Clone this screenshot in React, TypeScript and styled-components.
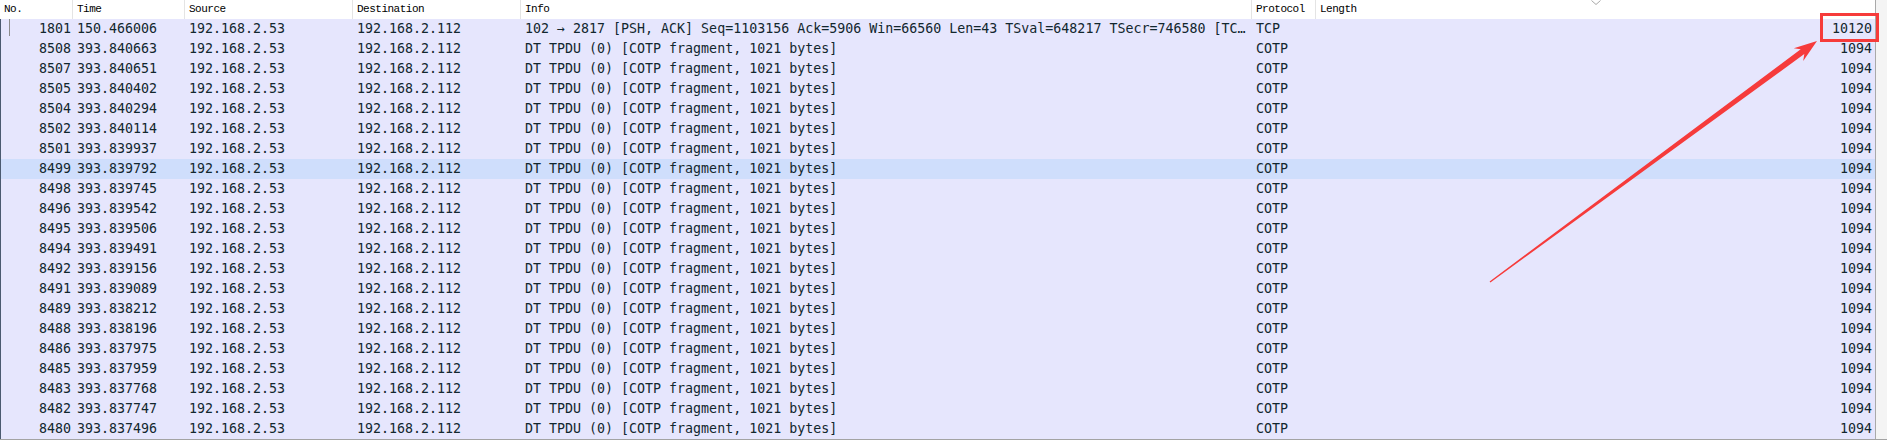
import React from "react";
import styled, { createGlobalStyle } from "styled-components";

const GlobalStyle = createGlobalStyle`
  html, body { margin: 0; padding: 0; background: #ffffff; }
  body { width: 1887px; height: 440px; overflow: hidden; }
`;

const HEADER_COLS = "73px 112px 168px 168px 731px 64px 559px";
const ROW_COLS = "72px 112px 168px 168px 731px 64px 559px";

const Frame = styled.div`
  position: relative;
  display: flex;
  width: 1887px;
  height: 440px;
  box-sizing: border-box;
  border-bottom: 1px solid #a3a3a3;
`;

const Pane = styled.div`
  display: flex;
  flex-direction: column;
  width: 1875px;
`;

const Gutter = styled.div`
  flex: 1;
  border-left: 1px solid #a9a9a9;
  background: #f4f4f4;
`;

const HeaderRow = styled.div`
  display: grid;
  grid-template-columns: ${HEADER_COLS};
  height: 19px;
  background: #ffffff;
`;

const HeaderCell = styled.div<{ $last?: boolean }>`
  position: relative;
  box-sizing: border-box;
  padding-left: 4px;
  border-right: ${(p) => (p.$last ? "none" : "1px solid #e4e4e4")};
  font-family: "Liberation Mono", monospace;
  font-size: 11px;
  letter-spacing: -0.5px;
  line-height: 19px;
  color: #000000;
  white-space: nowrap;
  overflow: hidden;
`;

const SortMark = styled.svg`
  position: absolute;
  left: 50%;
  top: 0;
  margin-left: -5px;
`;

const Body = styled.div`
  display: flex;
  flex-direction: column;
`;

const Row = styled.div<{ $selected?: boolean }>`
  display: grid;
  grid-template-columns: ${ROW_COLS};
  height: 20px;
  border-left: 1px solid #4b5a70;
  background: ${(p) => (p.$selected ? "#cfdefc" : "#e6e6fd")};
  font-family: "DejaVu Sans Mono", "Liberation Mono", monospace;
  font-size: 13.3px;
  line-height: 20px;
  color: #12272e;
`;

const Cell = styled.div<{ $right?: boolean; $pr?: number }>`
  box-sizing: border-box;
  padding-left: ${(p) => (p.$right ? 0 : 4)}px;
  padding-right: ${(p) => (p.$pr ?? 0)}px;
  text-align: ${(p) => (p.$right ? "right" : "left")};
  white-space: nowrap;
  overflow: hidden;
`;

const NoCell = styled.div`
  display: flex;
  justify-content: flex-end;
  padding-right: 2px;
  position: relative;
  white-space: nowrap;
`;

const RelatedMark = styled.span`
  position: absolute;
  left: 8px;
  top: 0;
  width: 1px;
  height: 17px;
  background: #8c8c8c;
`;

const Annotation = styled.svg`
  position: absolute;
  left: 0;
  top: 0;
  pointer-events: none;
`;

type Pkt = { no: string; time: string; info: string; proto: string; len: string };

const cotp = "DT TPDU (0) [COTP fragment, 1021 bytes]";
const rows: Pkt[] = [
  {
    no: "1801",
    time: "150.466006",
    info: "102 \u2192 2817 [PSH, ACK] Seq=1103156 Ack=5906 Win=66560 Len=43 TSval=648217 TSecr=746580 [TC\u2026",
    proto: "TCP",
    len: "10120",
  },
  ...[
    ["8508", "393.840663"],
    ["8507", "393.840651"],
    ["8505", "393.840402"],
    ["8504", "393.840294"],
    ["8502", "393.840114"],
    ["8501", "393.839937"],
    ["8499", "393.839792"],
    ["8498", "393.839745"],
    ["8496", "393.839542"],
    ["8495", "393.839506"],
    ["8494", "393.839491"],
    ["8492", "393.839156"],
    ["8491", "393.839089"],
    ["8489", "393.838212"],
    ["8488", "393.838196"],
    ["8486", "393.837975"],
    ["8485", "393.837959"],
    ["8483", "393.837768"],
    ["8482", "393.837747"],
    ["8480", "393.837496"],
  ].map(([no, time]) => ({ no, time, info: cotp, proto: "COTP", len: "1094" })),
];

export default function App() {
  return (
    <>
      <GlobalStyle />
      <Frame>
        <Pane>
          <HeaderRow>
            <HeaderCell>No.</HeaderCell>
            <HeaderCell>Time</HeaderCell>
            <HeaderCell>Source</HeaderCell>
            <HeaderCell>Destination</HeaderCell>
            <HeaderCell>Info</HeaderCell>
            <HeaderCell>Protocol</HeaderCell>
            <HeaderCell $last>
              Length
              <SortMark width="10" height="6" viewBox="0 0 10 6">
                <polyline points="0.5,0.5 5,4.5 9.5,0.5" fill="none" stroke="#a8a8a8" strokeWidth="1" />
              </SortMark>
            </HeaderCell>
          </HeaderRow>
          <Body>
            {rows.map((r, i) => (
              <Row key={r.no} $selected={r.no === "8499"}>
                <NoCell>
                  {i === 0 && <RelatedMark />}
                  {r.no}
                </NoCell>
                <Cell>{r.time}</Cell>
                <Cell>192.168.2.53</Cell>
                <Cell>192.168.2.112</Cell>
                <Cell>{r.info}</Cell>
                <Cell>{r.proto}</Cell>
                <Cell $right $pr={3}>
                  {r.len}
                </Cell>
              </Row>
            ))}
          </Body>
        </Pane>
        <Gutter />
        <Annotation width="1887" height="440" viewBox="0 0 1887 440">
          <rect x="1821.5" y="14.5" width="56" height="26" fill="none" stroke="#f63b3b" strokeWidth="3" />
          <polygon
            points="1489.6,281.5 1490.4,282.5 1804.3,54.1 1803.2,61 1817,41 1793.8,48.2 1800.7,49.3"
            fill="#f63b3b"
          />
        </Annotation>
      </Frame>
    </>
  );
}
